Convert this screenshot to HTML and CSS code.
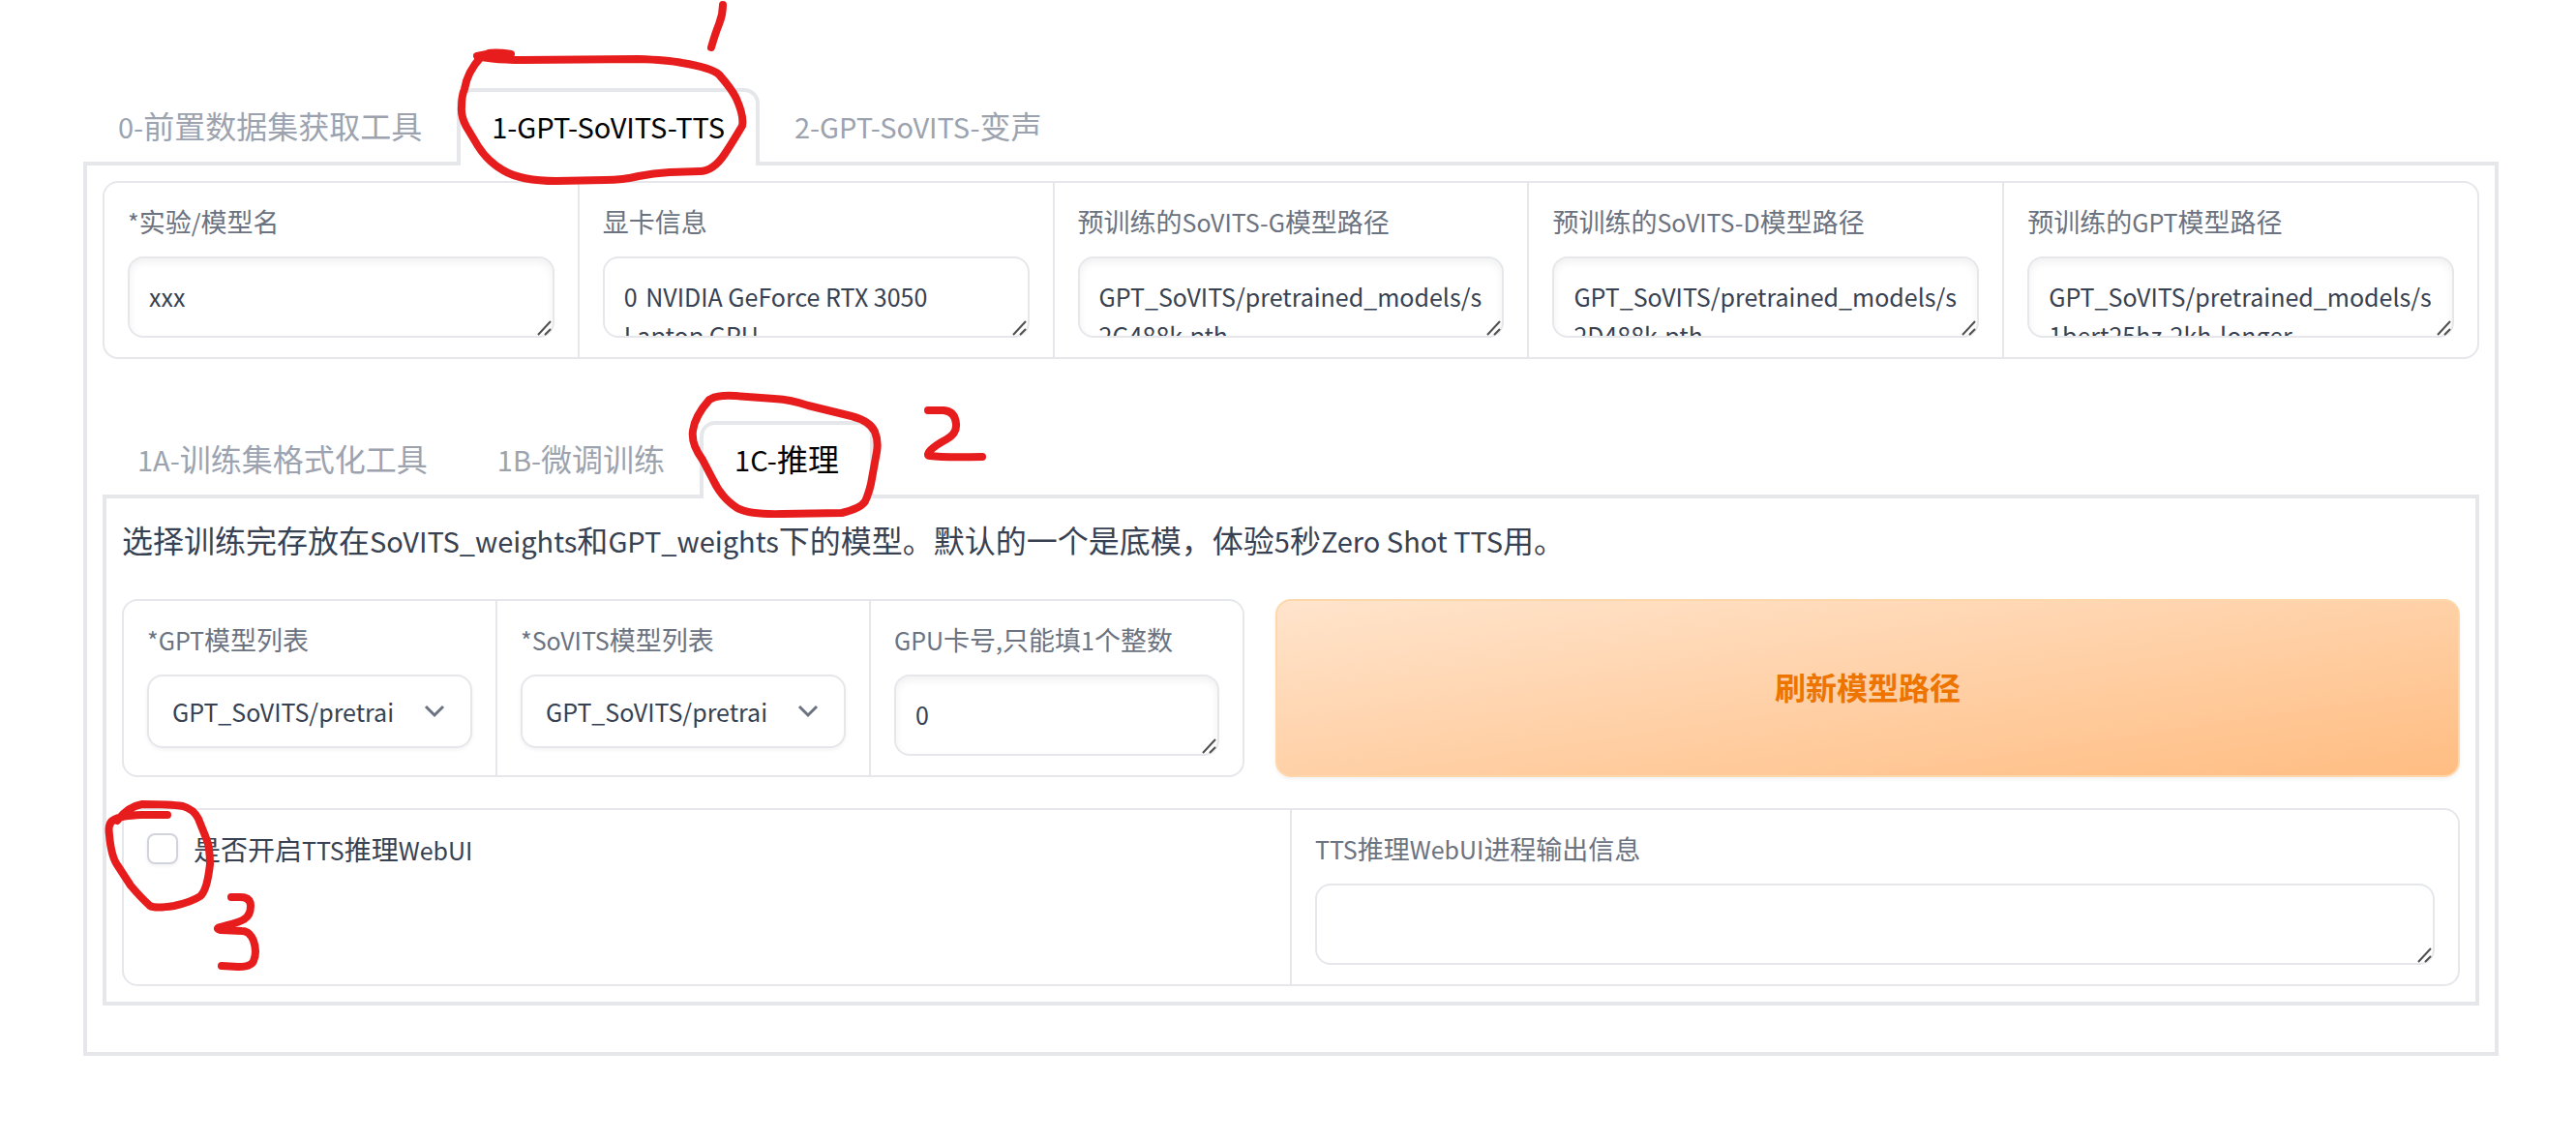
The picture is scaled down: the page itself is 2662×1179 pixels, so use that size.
FILE: index.html
```html
<!DOCTYPE html>
<html lang="zh-CN">
<head>
<meta charset="utf-8">
<title>GPT-SoVITS WebUI</title>
<link rel="stylesheet" href="styles.css">
</head>
<body>
<svg class="symbols" aria-hidden="true">
  <symbol id="grip" viewBox="0 0 18 18"><path d="M4 17 17 3M11 17l6-6" fill="none" stroke="#505050" stroke-width="2"/></symbol>
  <symbol id="chevron" viewBox="0 0 22 14"><path d="M2 2l9 9 9-9" fill="none" stroke="#6b7280" stroke-width="3"/></symbol>
</svg>

<main class="app">
  <div class="tabs" role="tablist">
    <button class="tab" role="tab"><span class="latin">0-</span>前置数据集获取工具</button>
    <button class="tab selected" role="tab" aria-selected="true"><span class="latin">1-GPT-SoVITS-TTS</span></button>
    <button class="tab" role="tab"><span class="latin">2-GPT-SoVITS-</span>变声</button>
  </div>

  <section class="panel outer">
    <div class="group five">
      <div class="cell">
        <label for="exp"><span class="latin">*</span>实验<span class="latin">/</span>模型名</label>
        <div class="area"><textarea id="exp" class="editable">xxx</textarea><svg class="grip"><use href="#grip"/></svg></div>
      </div>
      <div class="cell">
        <label for="gpu">显卡信息</label>
        <div class="area"><textarea id="gpu" readonly>0	NVIDIA GeForce RTX 3050 Laptop GPU</textarea><svg class="grip"><use href="#grip"/></svg></div>
      </div>
      <div class="cell">
        <label for="s2g">预训练的<span class="latin">SoVITS-G</span>模型路径</label>
        <div class="area"><textarea id="s2g" class="editable">GPT_SoVITS/pretrained_models/s2G488k.pth</textarea><svg class="grip"><use href="#grip"/></svg></div>
      </div>
      <div class="cell">
        <label for="s2d">预训练的<span class="latin">SoVITS-D</span>模型路径</label>
        <div class="area"><textarea id="s2d" class="editable">GPT_SoVITS/pretrained_models/s2D488k.pth</textarea><svg class="grip"><use href="#grip"/></svg></div>
      </div>
      <div class="cell">
        <label for="s1">预训练的<span class="latin">GPT</span>模型路径</label>
        <div class="area"><textarea id="s1" class="editable">GPT_SoVITS/pretrained_models/s1bert25hz-2kh-longer</textarea><svg class="grip"><use href="#grip"/></svg></div>
      </div>
    </div>

    <div class="tabs inner-tabs" role="tablist">
      <button class="tab" role="tab"><span class="latin">1A-</span>训练集格式化工具</button>
      <button class="tab" role="tab"><span class="latin">1B-</span>微调训练</button>
      <button class="tab selected" role="tab" aria-selected="true"><span class="latin">1C-</span>推理</button>
    </div>

    <section class="panel inner">
      <p class="intro">选择训练完存放在<span class="latin">SoVITS_weights</span>和<span class="latin">GPT_weights</span>下的模型。默认的一个是底模，体验<span class="latin">5</span>秒<span class="latin">Zero Shot TTS</span>用。</p>

      <div class="model-row">
        <div class="group three">
          <div class="cell">
            <label for="gptlist"><span class="latin">*GPT</span>模型列表</label>
            <div class="picker"><select id="gptlist"><option>GPT_SoVITS/pretrai</option></select><svg class="chevron"><use href="#chevron"/></svg></div>
          </div>
          <div class="cell">
            <label for="sovitslist"><span class="latin">*SoVITS</span>模型列表</label>
            <div class="picker"><select id="sovitslist"><option>GPT_SoVITS/pretrai</option></select><svg class="chevron"><use href="#chevron"/></svg></div>
          </div>
          <div class="cell">
            <label for="card"><span class="latin">GPU</span>卡号<span class="latin">,</span>只能填<span class="latin">1</span>个整数</label>
            <div class="area"><textarea id="card" class="editable">0</textarea><svg class="grip"><use href="#grip"/></svg></div>
          </div>
        </div>
        <button class="refresh">刷新模型路径</button>
      </div>

      <div class="group two">
        <div class="cell">
          <label class="check"><input type="checkbox"><span>是否开启<span class="latin">TTS</span>推理<span class="latin">WebUI</span></span></label>
        </div>
        <div class="cell">
          <label for="out"><span class="latin">TTS</span>推理<span class="latin">WebUI</span>进程输出信息</label>
          <div class="area"><textarea id="out" readonly></textarea><svg class="grip"><use href="#grip"/></svg></div>
        </div>
      </div>
    </section>
  </section>
</main>

<!-- hand-drawn step markers -->
<svg class="marks" width="1100" height="1040" viewBox="0 0 1100 1040" aria-hidden="true">
  <path d="M747 5Q747 15 743 25T735 49"/>
  <path d="M528 56Q508 53 503 56L493 58Q510 62 540 62L660 61Q690 62 705 65Q735 70 743 77Q757 93 761 102Q769 120 767 130Q757 147 749 159Q737 177 723 177L692 178Q675 179 660 182Q644 186 625 186L575 187Q538 187 520 176Q504 167 494 151L482 131Q476 120 477 110Q477 99 480 92Q483 74 497 59"/>
  <path d="M735 412Q742 408 760 409L800 412Q818 413 835 419L880 430Q899 435 904 446Q908 456 906 467L900 500Q897 512 894 518Q890 525 870 530L809 531Q775 532 762 525Q746 515 737 496L726 475Q714 459 716 445Q718 430 733 413"/>
  <path d="M959 424H975Q987 425 988 438Q989 448 978 454C963 462 955 470 961 471Q975 473 1015 472"/>
  <path d="M173 842H146Q124 843 118 847Q111 850 113 863Q115 886 122 895L135 915Q146 928 155 936Q160 939 180 936Q198 932 207 926Q214 920 217 893Q217 875 213 866L205 846Q200 836 189 833Q176 831 147 831Q133 833 121 848"/>
  <path d="M239 927H248Q259 927 259 936Q259 946 252 950C243 956 216 958 228 961L250 962Q258 962 262 972Q266 984 262 993Q260 999 246 999L229 998"/>
</svg>
</body>
</html>
```
FILE: styles.css
```css
:root {
  --line: #e5e7eb;
  --ink: #374151;
  --muted: #6b7280;
  --faint: #9ca3af;
}

* { box-sizing: border-box; }

body {
  margin: 0;
  background: #fff;
  color: var(--ink);
  font-family: "Noto Sans CJK SC", sans-serif;
  font-size: 28px;
}

button, select, textarea { font-family: inherit; }

/* Latin glyphs run large beside the Han ones, so they are set smaller */
.latin { font-size: 25px; line-height: 1; }
.tab .latin, .intro .latin { font-size: 29px; }

.symbols { display: none; }

.app { padding: 91px 80px 80px 86px; }

.tabs { display: flex; }
.inner-tabs { margin-top: 64px; }

.tab {
  height: 80px;
  margin-bottom: -4px;
  padding: 0 32px 8px;
  border: 4px solid transparent;
  border-bottom: 0;
  border-radius: 16px 16px 0 0;
  background: none;
  color: var(--faint);
  font-size: 32px;
  line-height: 48px;
  white-space: nowrap;
}

.tab.selected {
  position: relative;
  border-color: var(--line);
  background: #fff;
  color: #000;
}

.panel { border: 4px solid var(--line); padding: 16px; }
.outer { padding-bottom: 48px; }

.group {
  display: grid;
  gap: 2px;
  border: 2px solid var(--line);
  border-radius: 16px;
  background: var(--line);
  overflow: hidden;
}
.five { grid-template-columns: repeat(5, minmax(0, 1fr)); }
.three { grid-template-columns: repeat(3, minmax(0, 1fr)); }
.two { grid-template-columns: repeat(2, minmax(0, 1fr)); }

.cell { padding: 20px 24px; background: #fff; }

label {
  display: block;
  height: 40px;
  margin-bottom: 16px;
  color: var(--muted);
  font-size: 27px;
  line-height: 40px;
  white-space: nowrap;
}

.area, .picker { position: relative; }

textarea, select {
  display: block;
  width: 100%;
  border: 2px solid var(--line);
  border-radius: 16px;
  background: #fff;
  color: var(--ink);
  font-size: 25px;
}

textarea {
  height: 84px;
  padding: 19px 20px 0;
  line-height: 40px;
  tab-size: 2;
  overflow: hidden;
  resize: none;
  word-break: break-all;
}
#gpu { word-break: normal; }
.editable { box-shadow: inset 0 4px 8px rgba(0, 0, 0, .06); }

.grip {
  position: absolute;
  right: 3px;
  bottom: 2px;
  width: 18px;
  height: 18px;
}

select {
  height: 76px;
  padding: 0 56px 0 24px;
  box-shadow: 0 2px 4px rgba(0, 0, 0, .05);
  appearance: none;
}

.chevron {
  position: absolute;
  top: 31px;
  right: 28px;
  width: 22px;
  height: 14px;
}

.intro { height: 56px; margin: 0 0 32px; font-size: 32px; line-height: 52px; }

.model-row {
  display: grid;
  grid-template-columns: 145fr 153fr;
  gap: 32px;
  margin-bottom: 32px;
}

.refresh {
  padding: 0 32px 4px;
  border: 2px solid #fed7aa;
  border-radius: 16px;
  background: linear-gradient(to bottom right, #ffe4cc, #ffbd82);
  box-shadow: 0 2px 4px rgba(0, 0, 0, .06);
  color: #ee7400;
  font-size: 32px;
  font-weight: 700;
}

.check {
  display: flex;
  align-items: center;
  gap: 16px;
  color: var(--ink);
  font-size: 28px;
}
.check input {
  width: 32px;
  height: 32px;
  margin: 0;
  border: 2px solid #d1d5db;
  border-radius: 8px;
  background: #fff;
  box-shadow: 0 2px 4px rgba(0, 0, 0, .05);
  appearance: none;
}

.marks {
  position: absolute;
  top: 0;
  left: 0;
  fill: none;
  stroke: #e71c1c;
  stroke-width: 8;
  stroke-linecap: round;
  stroke-linejoin: round;
  pointer-events: none;
}
```
